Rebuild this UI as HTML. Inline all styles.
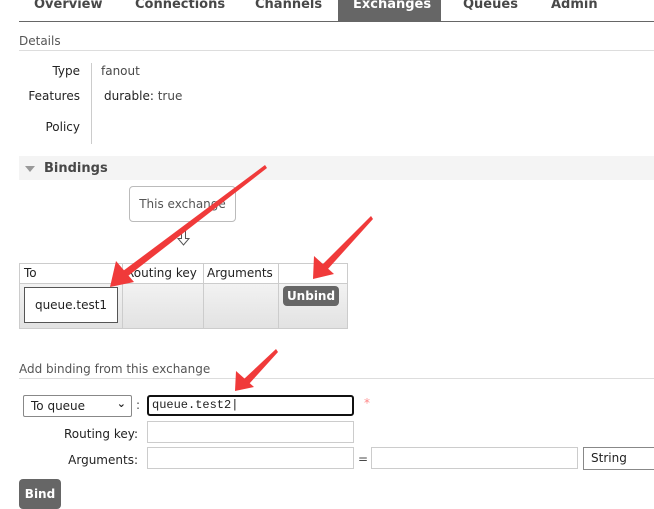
<!DOCTYPE html>
<html><head><style>
body{margin:0;width:654px;height:509px;overflow:hidden;background:#fff;font-family:"DejaVu Sans","Liberation Sans",sans-serif;font-size:12px;color:#484848;position:relative}
.a{position:absolute;white-space:nowrap}
.tab{position:absolute;top:-3px;font-weight:bold;font-size:13px;color:#484848}
.inp{position:absolute;border:1px solid #ccc;background:#fff;box-sizing:border-box}
</style></head><body>
<div class="a" style="left:338px;top:0;width:103px;height:21px;background:#666"></div>
<div class="tab" style="left:34px">Overview</div>
<div class="tab" style="left:135px">Connections</div>
<div class="tab" style="left:255px">Channels</div>
<div class="tab" style="left:353px;color:#fff">Exchanges</div>
<div class="tab" style="left:463px">Queues</div>
<div class="tab" style="left:551px">Admin</div>
<div class="a" style="left:19px;top:21px;width:635px;height:1px;background:#666"></div>

<div class="a" style="left:19px;top:34px;color:#555">Details</div>
<div class="a" style="left:19px;top:50px;width:635px;height:1px;background:#ddd"></div>
<div class="a" style="left:91px;top:63px;width:1px;height:81px;background:#ccc"></div>
<div class="a" style="left:30px;top:64px;width:50px;text-align:right;color:#222">Type</div>
<div class="a" style="left:101px;top:64px">fanout</div>
<div class="a" style="left:20px;top:89px;width:60px;text-align:right;color:#222">Features</div>
<div class="a" style="left:104px;top:89px;color:#222">durable: <span style="color:#484848">true</span></div>
<div class="a" style="left:30px;top:120px;width:50px;text-align:right;color:#222">Policy</div>

<div class="a" style="left:19px;top:156px;width:635px;height:24px;background:#f4f4f4"></div>
<div class="a" style="left:25px;top:166px;width:0;height:0;border-left:5px solid transparent;border-right:5px solid transparent;border-top:6px solid #999"></div>
<div class="a" style="left:44px;top:161px;font-weight:bold;font-size:13px;color:#484848">Bindings</div>

<div class="a" style="left:129px;top:186px;width:107px;height:36px;border:1px solid #bbb;border-radius:4px;box-sizing:border-box;line-height:34px;text-align:center;color:#555">This exchange</div>

<div class="a" style="left:19px;top:263px;width:329px;height:66px;border:1px solid #ccc;box-sizing:border-box;background:linear-gradient(#fff 0 20px,#f2f2f2 20px,#e2e2e2)"></div>
<div class="a" style="left:19px;top:283px;width:329px;height:1px;background:#ccc"></div>
<div class="a" style="left:122px;top:263px;width:1px;height:66px;background:#ccc"></div>
<div class="a" style="left:203px;top:263px;width:1px;height:66px;background:#ccc"></div>
<div class="a" style="left:278px;top:263px;width:1px;height:66px;background:#ccc"></div>
<div class="a" style="left:24px;top:266px;color:#222">To</div>
<div class="a" style="left:126px;top:266px;color:#222">Routing key</div>
<div class="a" style="left:207px;top:266px;color:#222">Arguments</div>
<div class="a" style="left:24px;top:287px;width:94px;height:36px;border:1px solid #555;background:#fff;box-sizing:border-box;line-height:34px;text-align:center;color:#222">queue.test1</div>
<div class="a" style="left:283px;top:286px;width:56px;height:20px;background:#666;border-radius:4px;color:#fff;font-weight:bold;text-align:center;line-height:20px">Unbind</div>

<div class="a" style="left:19px;top:362px;color:#555">Add binding from this exchange</div>
<div class="a" style="left:19px;top:378px;width:635px;height:1px;background:#ddd"></div>
<div class="inp" style="left:23px;top:395px;width:109px;height:22px;border-color:#888;border-radius:2px;padding:3px 7px;color:#222">To queue<span style="position:absolute;right:5px;top:1px;font-size:11px;font-weight:bold">⌄</span></div>
<div class="a" style="left:136px;top:398px">:</div>
<div class="inp" style="left:147px;top:395px;width:207px;height:21px;border:2px solid #111;border-radius:3px;font-family:'Liberation Mono',monospace;font-size:12px;padding:1px 3px;color:#222">queue.test2|</div>
<div class="a" style="left:364px;top:396px;color:#f88">*</div>
<div class="a" style="left:40px;top:427px;width:98px;text-align:right;color:#222">Routing key:</div>
<div class="inp" style="left:147px;top:421px;width:207px;height:22px"></div>
<div class="a" style="left:40px;top:453px;width:98px;text-align:right;color:#222">Arguments:</div>
<div class="inp" style="left:147px;top:447px;width:207px;height:22px"></div>
<div class="a" style="left:358px;top:452px">=</div>
<div class="inp" style="left:371px;top:447px;width:207px;height:22px"></div>
<div class="inp" style="left:583px;top:447px;width:80px;height:23px;border-color:#888;padding:3px 7px;color:#222">String</div>
<div class="a" style="left:19px;top:479px;width:42px;height:30px;background:#666;border-radius:4px;color:#fff;font-weight:bold;text-align:center;line-height:30px">Bind</div>

<svg class="a" style="left:0;top:0" width="654" height="509">
<path d="M181.5 230.5 V238.5 H178 L183.5 245 L189 238.5 H185.5 V230.5 Z" fill="none" stroke="#555" stroke-width="1"/>
<g fill="#f03a3a">
<polygon points="265,165 267,168 128,276 123,271"/>
<polygon points="110,287 116,261 134,282"/>
<polygon points="371,216 373,219 327,270 322,265"/>
<polygon points="313,279 314,256 334,274"/>
<polygon points="276,349 278,352 249,384 244,379"/>
<polygon points="235,391 236,371 254,387"/>
</g></svg>
</body></html>
